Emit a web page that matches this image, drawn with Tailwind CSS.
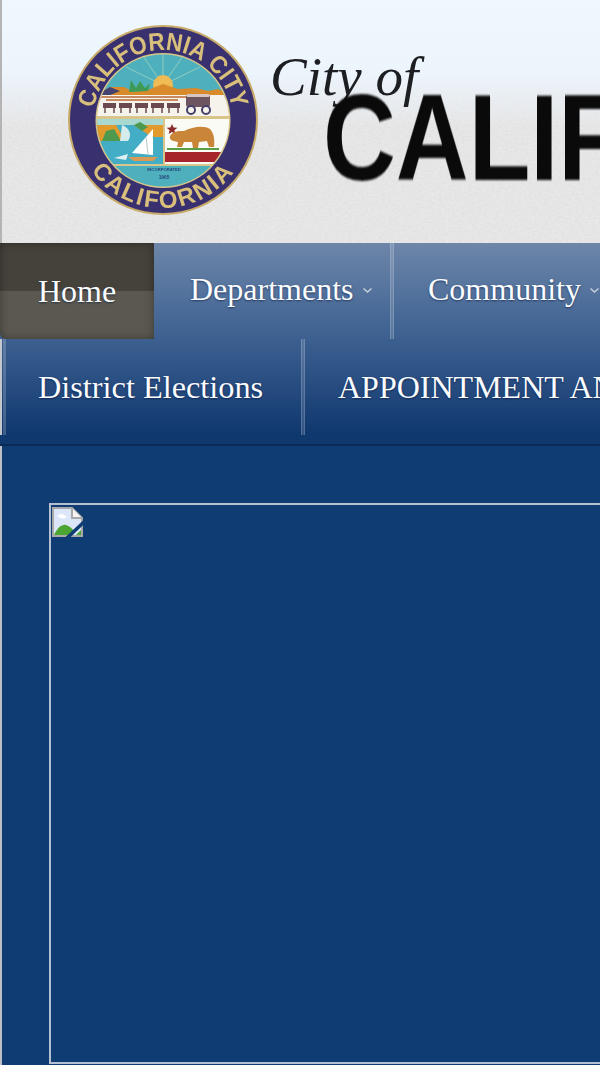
<!DOCTYPE html>
<html lang="en">
<head>
  <meta charset="UTF-8" />
  <meta name="viewport" content="width=device-width, initial-scale=1.0" />
  <title>City of California City</title>
  <script src="https://cdn.jsdelivr.net/npm/@tailwindcss/browser@4"></script>
</head>
<body class="bg-[#103c74]">
<div class="w-[600px] h-[1065px] overflow-hidden bg-[#103c74] font-['Liberation_Serif',serif]">

  <!-- header -->
  <header class="relative h-[243px] overflow-hidden border-l-2 border-[#b4b4b4] bg-[#e8e8e8] flex items-start pl-[66px] pt-[25px]">
    <svg class="absolute inset-0" width="600" height="243" aria-hidden="true">
      <filter id="grain"><feTurbulence type="fractalNoise" baseFrequency="0.3 0.55" numOctaves="3" seed="4"/><feColorMatrix values="0 0 0 0 0.55 0 0 0 0 0.55 0 0 0 0 0.55 0.9 0 0 0 -0.28"/></filter>
      <rect width="600" height="243" filter="url(#grain)" opacity="0.4"/>
    </svg>
    <div class="absolute inset-0 bg-gradient-to-b from-[#eff7ff] via-[#ecf4fc] via-30% to-[#e8eaec]/0 to-52%"></div>

    <!-- seal -->
    <svg class="relative shrink-0 blur-[0.7px]" width="190" height="190" viewBox="0 0 190 190">
      <defs>
        <path id="arcTop" d="M 25 95 A 70 70 0 1 1 165 95"/>
        <path id="arcBottom" d="M 7 95 A 88 88 0 0 0 183 95"/>
        <clipPath id="inner"><circle cx="95" cy="95.5" r="66"/></clipPath>
      </defs>
      <circle cx="95" cy="95" r="95" fill="#c8aa68"/>
      <circle cx="95" cy="95" r="93" fill="#39306f"/>
      <text font-family="Liberation Sans" font-weight="700" font-size="25" fill="#d9bf7c" text-anchor="middle"><textPath href="#arcTop" startOffset="50%" textLength="196" lengthAdjust="spacingAndGlyphs">CALIFORNIA CITY</textPath></text>
      <text font-family="Liberation Sans" font-weight="700" font-size="24" fill="#d9bf7c" letter-spacing="2" text-anchor="middle"><textPath href="#arcBottom" startOffset="50%">CALIFORNIA</textPath></text>
      <circle cx="95" cy="95.5" r="67.5" fill="#d8c589"/>
      <g clip-path="url(#inner)">
        <rect x="20" y="25" width="150" height="50" fill="#4fb0bd"/>
        <g stroke="#8fcbc0" stroke-width="1"><path d="M95 60 L95 28M95 60 L75 31M95 60 L115 31M95 60 L58 42M95 60 L132 42"/></g>
        <circle cx="95" cy="60" r="10" fill="#eebb55"/>
        <path d="M28 70 L42 62 L56 62 L66 67 L80 65 L95 59 L110 64 L128 63 L140 66 L150 64 L164 70 L164 72 L28 72Z" fill="#d98a2a"/>
        <path d="M28 70 L42 62 L52 66 L40 71Z" fill="#45426f"/>
        <path d="M61 67 L63 55 L68 63 L72 56 L77 63 L82 58 L80 66Z" fill="#3f9a55"/>
        <rect x="20" y="70" width="150" height="21" fill="#f6f2ec"/>
        <path d="M32 72 H118 M38 75 H110" stroke="#c98a60" stroke-width="2"/>
        <g fill="#6a4a50">
          <rect x="35" y="78" width="13" height="5"/><rect x="51" y="78" width="13" height="5"/><rect x="67" y="78" width="13" height="5"/><rect x="83" y="78" width="13" height="5"/><rect x="99" y="78" width="13" height="5"/>
          <path d="M37 83v5M46 83v5M53 83v5M62 83v5M69 83v5M78 83v5M85 83v5M94 83v5M101 83v5M110 83v5" stroke="#6a4a50" stroke-width="1.5"/>
        </g>
        <rect x="118" y="70" width="24" height="12" rx="2" fill="#6f5560"/>
        <rect x="119" y="69" width="22" height="3" fill="#d7c6c0"/>
        <circle cx="123" cy="85" r="4" fill="none" stroke="#45406a" stroke-width="2"/>
        <circle cx="138" cy="85" r="4" fill="none" stroke="#45406a" stroke-width="2"/>

        <rect x="20" y="91" width="150" height="3" fill="#d8c589"/>
        <!-- left panel -->
        <rect x="20" y="94" width="75" height="45" fill="#42adc4"/>
        <rect x="20" y="94" width="75" height="6" fill="#a9d8d0"/>
        <path d="M20 100 H48 L56 114 L55 116 H20Z" fill="#e39a2c"/>
        <path d="M34 116 L38 106 L46 104 L53 116Z" fill="#4d9a4f"/>
        <path d="M54 100 C62 103 64 110 60 116 L52 116Z" fill="#d5ecec"/>
        <path d="M66 100 H95 V112 H84 Z" fill="#e39a2c"/>
        <path d="M66 100 L72 97 L80 102 L74 106Z" fill="#4d9a4f"/>
        <path d="M85 130 V104 L64 128Z" fill="#ffffff"/>
        <path d="M78 112 L80 129" stroke="#b9c6c8" stroke-width="1"/>
        <path d="M60 132 H90 L85 136 H66Z" fill="#d99a55"/>
        <path d="M46 133 L60 129 L58 135Z" fill="#dff0f2"/>
        <!-- right panel -->
        <rect x="97" y="94" width="66" height="45" fill="#fbfbf6"/>
        <path d="M104 99 l1.6 3.6 3.8.2-3 2.4 1 3.7-3.4-2-3.4 2 1-3.7-3-2.4 3.8-.2Z" fill="#8a2a2a"/>
        <path d="M102 111 C106 105 112 106 116 106 C124 102 136 100 142 104 C146 108 147 116 146 122 L141 122 L139 116 L131 117 L130 123 L125 123 L124 117 L116 117 L114 122 L109 122 L110 117 C106 116 101 116 102 111Z" fill="#c98639"/>
        <path d="M99 124 H151" stroke="#5c9e45" stroke-width="2"/>
        <rect x="97" y="127" width="58" height="10" fill="#a5252a"/>
        <rect x="20" y="139" width="150" height="2" fill="#d8c589"/>
        <rect x="20" y="141" width="150" height="25" fill="#4fb0bd"/>
        <text x="96" y="146" font-family="Liberation Sans" font-weight="700" font-size="4.2" fill="#28457a" text-anchor="middle">INCORPORATED</text>
        <text x="96" y="154" font-family="Liberation Sans" font-weight="700" font-size="4.8" fill="#28457a" text-anchor="middle">1965</text>
      </g>
    </svg>

    <!-- wordmark -->
    <div class="relative shrink-0 ml-[12px] mt-[24px] text-[55px] leading-none italic text-[#1c1e22] whitespace-nowrap [font-family:'Liberation_Serif',serif]">City of</div>
    <span class="absolute left-[321px] top-[76px] origin-left scale-x-[0.82] text-[123px] leading-none font-bold text-[#0a0a0a] whitespace-nowrap blur-[0.8px] font-['Liberation_Sans',sans-serif]">CALIFORNIA CITY</span>
  </header>

  <!-- nav -->
  <nav class="h-[203px] bg-gradient-to-b from-[#6d86a9] via-[#3f6292] via-45% to-[#0f386f] to-95% border-b-2 border-[#0b2a58] text-[#fbfcfe] text-[32px] leading-none [text-shadow:0_1px_2px_rgba(0,20,60,0.6)]">
    <ul class="flex h-[96px] whitespace-nowrap">
      <li class="w-[154px] shrink-0 rounded-bl-[6px] bg-gradient-to-b from-[#45423b] from-50% to-[#5a5850] to-50% shadow-[inset_0_0_8px_rgba(0,0,0,0.35)] flex items-center pl-[38px]">Home</li>
      <li class="flex items-center shrink-0 w-[236px] pl-[36px] pb-[4px]">Departments
        <svg class="ml-[8px] mt-[2px]" width="11" height="7" viewBox="0 0 11 7"><path d="M1.5 1.5 L5.5 5 L9.5 1.5" fill="none" stroke="#c5cfdc" stroke-width="1.6"/></svg>
      </li>
      <li class="shrink-0 w-[4px] border-x border-white/15 bg-white/15"></li>
      <li class="flex items-center shrink-0 pl-[34px] pb-[4px]">Community
        <svg class="ml-[8px] mt-[2px]" width="11" height="7" viewBox="0 0 11 7"><path d="M1.5 1.5 L5.5 5 L9.5 1.5" fill="none" stroke="#c5cfdc" stroke-width="1.6"/></svg>
      </li>
    </ul>
    <ul class="flex h-[96px] whitespace-nowrap border-l-2 border-[#c4c8cc] pl-[1px]">
      <li class="shrink-0 w-[3px] bg-white/20"></li>
      <li class="flex items-center shrink-0 w-[295px] pl-[32px] text-[32.3px]">District Elections</li>
      <li class="shrink-0 w-[4px] border-x border-white/15 bg-white/15"></li>
      <li class="flex items-center shrink-0 pl-[33px]">APPOINTMENT AND ELECTIONS</li>
    </ul>
  </nav>

  <!-- main content, image failed to load -->
  <main class="border-l-2 border-[#bcc0c4] pl-[47px] pt-[57px] h-[619px]">
    <div class="w-[600px] h-[561px] border-2 border-[#b4c0cf] p-[1px]">
      <svg class="block mt-[1px]" width="31" height="30" viewBox="0 0 31 30" aria-label="broken image">
        <path d="M1 1 H20 L30 11 V29 H1Z" fill="#dbe6f8" stroke="#a9a9a9" stroke-width="2"/>
        <path d="M20 1 V11 H30" fill="#f4f4f4" stroke="#a9a9a9" stroke-width="2"/>
        <path d="M5 9 C8 6 13 7 15 10 C13 12 8 12 5 9Z" fill="#ffffff"/>
        <path d="M2 28 C5 21 10 17 14 18 C17 19 20 21 22 24 L18 28Z" fill="#4ca532"/>
        <path d="M24 28 L29 23 V28Z" fill="#4ca532"/>
        <path d="M14 32 L33 14" stroke="#103c74" stroke-width="3.5"/>
      </svg>
    </div>
  </main>
</div>
</body>
</html>
